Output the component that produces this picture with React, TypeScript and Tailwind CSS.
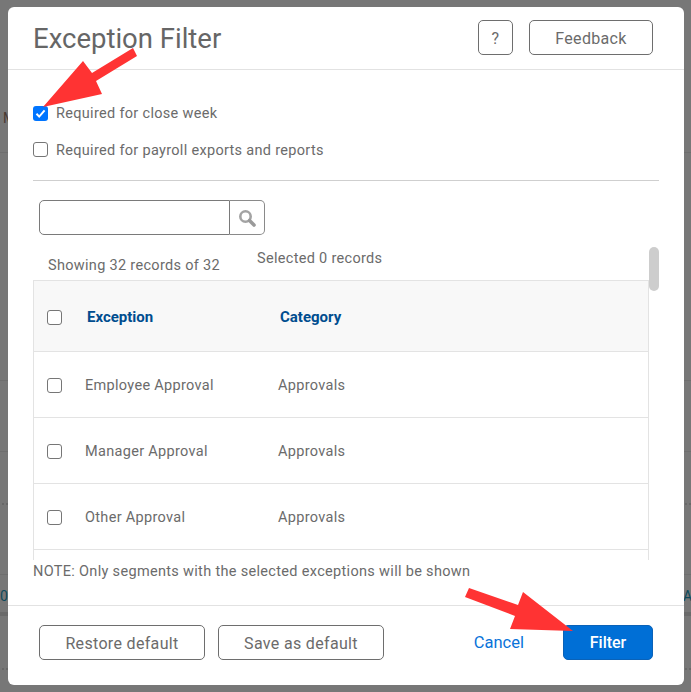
import React from "react";

const font = { fontFamily: "Roboto, sans-serif" };

function Box({ checked = false }: { checked?: boolean }) {
  return (
    <span
      className={
        checked
          ? "flex h-[15px] w-[15px] shrink-0 items-center justify-center rounded-[3px] bg-[#0075ff]"
          : "flex h-[15px] w-[15px] shrink-0 rounded-[3px] border border-[#767676] bg-white"
      }
    >
      {checked && (
        <svg width="13" height="13" viewBox="0 0 13 13" fill="none">
          <path d="M2.5 6.8 L5.2 9.6 L10.6 3.4" stroke="white" strokeWidth="2" />
        </svg>
      )}
    </span>
  );
}

function OutlineBtn({ className, children }: { className: string; children: React.ReactNode }) {
  return (
    <div className={`flex h-[35px] items-center justify-center rounded-[5px] border border-[#6e6e6e] bg-white pt-[2px] text-[16px] tracking-[0.33px] text-[#6b6b6b] ${className}`}>
      {children}
    </div>
  );
}

function Row({ name }: { name: string }) {
  return (
    <div className="flex h-[66px] shrink-0 items-center border-b border-[#e3e3e3] text-[14.5px] tracking-[0.31px] text-[#6b6b6b]">
      <div className="ml-[13px] mt-[1px]">
        <Box />
      </div>
      <span className="ml-[23px] mt-[2px] w-[193px]">{name}</span>
      <span className="mt-[2px]">Approvals</span>
    </div>
  );
}

function Backdrop() {
  return (
    <>
      <div className="absolute inset-x-0 top-[152px] h-px bg-[#6e6e6e]" />
      <div className="absolute inset-x-0 top-[380px] h-px bg-[#6e6e6e]" />
      <div className="absolute inset-x-0 top-[451px] h-px bg-[#6e6e6e]" />
      <div className="absolute inset-x-0 top-[574px] h-px bg-[#6e6e6e]" />
      <div className="absolute inset-x-0 top-[612px] h-[4px] bg-[#6a6a6a]" />
      <div className="absolute left-[2px] top-[503px] h-[2px] w-[2px] bg-[#686868]" />
      <div className="absolute left-[6px] top-[503px] h-[2px] w-[2px] bg-[#686868]" />
      <div className="absolute left-[685px] top-[503px] h-[2px] w-[2px] bg-[#686868]" />
      <div className="absolute left-[689px] top-[503px] h-[2px] w-[2px] bg-[#686868]" />
      <div className="absolute left-[2px] top-[668px] h-[2px] w-[2px] bg-[#686868]" />
      <div className="absolute left-[6px] top-[668px] h-[2px] w-[2px] bg-[#686868]" />
      <div className="absolute left-[685px] top-[668px] h-[2px] w-[2px] bg-[#686868]" />
      <div className="absolute left-[689px] top-[668px] h-[2px] w-[2px] bg-[#686868]" />
      <span className="absolute left-[3px] top-[108px] text-[14px] text-[#4a3a33]">M</span>
      <span className="absolute left-0 top-[586px] text-[14px] text-[#0c4a5c]">0</span>
      <span className="absolute left-[683px] top-[586px] text-[14px] text-[#0c4a5c]">A</span>
    </>
  );
}

export default function App() {
  return (
    <div className="relative h-[692px] w-[691px] overflow-hidden bg-[#777777] pl-[8px] pt-[7px]" style={font}>
      <Backdrop />
      <div className="relative flex h-[678px] w-[676px] flex-col rounded-[6px] bg-white">
        <div className="flex h-[63px] shrink-0 items-start border-b border-[#e2e2e2] pl-[25px] pr-[31px] pt-[13px]">
          <h1 className="mt-[1px] text-[27.5px] leading-[35px] text-[#666]">Exception Filter</h1>
          <OutlineBtn className="ml-auto w-[35px]">?</OutlineBtn>
          <OutlineBtn className="ml-[16px] w-[124px]">Feedback</OutlineBtn>
        </div>

        <div className="flex-1 px-[25px]">
          <label className="mt-[36px] flex h-[15px] items-center gap-[8px] text-[14.5px] tracking-[0.31px] text-[#6b6b6b]">
            <Box checked />
            <span>Required for close week</span>
          </label>
          <label className="mt-[21px] flex h-[15px] items-center gap-[8px] text-[14.5px] tracking-[0.31px] text-[#6b6b6b]">
            <Box />
            <span className="mt-[2px]">Required for payroll exports and reports</span>
          </label>
          <div className="mt-[23px] h-px w-[626px] bg-[#cfcfcf]" />

          <div className="ml-[6px] mt-[19px] flex h-[35px] w-[226px]">
            <div className="h-full w-[191px] rounded-l-[5px] border border-[#7a7a7a]" />
            <div className="flex h-full w-[35px] items-center justify-center rounded-r-[5px] border border-l-0 border-[#8a8a8a]">
              <svg width="20" height="20" viewBox="0 0 20 20" fill="none">
                <circle cx="8.5" cy="8.5" r="5.2" stroke="#a3a3a3" strokeWidth="2.6" />
                <path d="M12.5 12.5 L17 17" stroke="#9a9a9a" strokeWidth="3.6" strokeLinecap="round" />
              </svg>
            </div>
          </div>

          <div className="relative h-[45px] text-[14.5px] tracking-[0.31px] text-[#6b6b6b]">
            <span className="absolute left-[15px] top-[20px]">Showing 32 records of 32</span>
            <span className="absolute left-[224px] top-[13px]">Selected 0 records</span>
          </div>

          <div className="h-[280px] w-[616px] overflow-hidden">
            <div className="flex h-full flex-col border-x border-t border-[#e3e3e3]">
              <div className="flex h-[71px] shrink-0 items-center border-b border-[#e3e3e3] bg-[#f8f8f8] text-[15px] font-bold text-[#004d8f]">
                <div className="ml-[13px] mt-[2px]">
                  <Box />
                </div>
                <span className="ml-[25px] mt-[2px] w-[193px]">Exception</span>
                <span className="mt-[2px]">Category</span>
              </div>
              <Row name="Employee Approval" />
              <Row name="Manager Approval" />
              <Row name="Other Approval" />
              <div className="flex-1" />
            </div>
          </div>

          <p className="mt-[1px] text-[14.5px] tracking-[0.32px] text-[#6b6b6b]">NOTE: Only segments with the selected exceptions will be shown</p>
        </div>

        <div className="flex h-[80px] shrink-0 items-start border-t border-[#e2e2e2] pl-[31px] pr-[31px] pt-[19px]">
          <OutlineBtn className="w-[166px]">Restore default</OutlineBtn>
          <OutlineBtn className="ml-[13px] w-[166px]">Save as default</OutlineBtn>
          <span className="ml-auto text-[16.5px] leading-[35px] text-[#0a73d9]">Cancel</span>
          <div className="ml-[39px] flex h-[35px] w-[90px] items-center justify-center rounded-[5px] border border-[#0a62b8] bg-[#006fd6] text-[16px] font-medium text-white">
            Filter
          </div>
        </div>

        <div className="absolute left-[641px] top-[240px] h-[44px] w-[10px] rounded-[5px] bg-[#cdcdcd]" />
      </div>

      <svg className="pointer-events-none absolute left-0 top-0" width="691" height="692" viewBox="0 0 691 692">
        <polygon points="43,107 83,61 92,73 133,48 137,56 96,81 102,94" fill="#ff3333" />
        <polygon points="465,597 469,588 518,605 523,592 573,631 510,629 515,616" fill="#ff3333" />
      </svg>
    </div>
  );
}
